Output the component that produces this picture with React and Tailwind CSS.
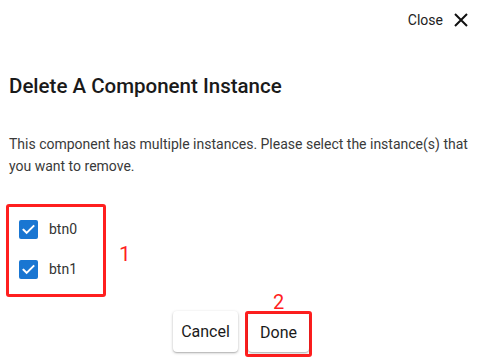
import React from "react";

function Check() {
  return (
    <span className="flex h-[19px] w-[19px] items-center justify-center rounded-[2px] bg-[#1976d2]">
      <svg width="15" height="15" viewBox="0 0 24 24" fill="none">
        <path d="M4 12.5l5 5L20 6.5" stroke="white" strokeWidth="3.2" strokeLinecap="square" />
      </svg>
    </span>
  );
}

export default function App() {
  return (
    <div className="relative h-[360px] w-[482px] overflow-hidden bg-white font-['Roboto',sans-serif] text-[#212121]">
      <div className="flex items-center justify-end gap-[10px] pr-[13px] pt-[11px]">
        <span className="text-[14px] leading-[18px] text-[#222]">Close</span>
        <svg width="16" height="16" viewBox="0 0 16 16">
          <path d="M2 2L14 14M14 2L2 14" stroke="#111" strokeWidth="2" />
        </svg>
      </div>
      <h1 className="ml-[9px] mt-[45px] text-[20.5px] font-medium leading-[24px] text-[#1a1a1a]">
        Delete A Component Instance
      </h1>
      <p className="ml-[9px] mt-[35px] w-[470px] text-[14px] leading-[22px] text-[#3a3a3a]">
        This component has multiple instances. Please select the instance(s) that you want to remove.
      </p>
      <div className="ml-[6px] mt-[27px] flex items-center gap-[13px]">
        <div className="flex h-[93px] w-[100px] flex-col justify-center gap-[21px] rounded-[3px] border-[3px] border-[#ff1f1f] pb-[3px] pl-[10px]">
          <label className="flex items-center gap-[11px]">
            <Check />
            <span className="text-[14px] leading-[18px] text-[#333]">btn0</span>
          </label>
          <label className="flex items-center gap-[11px]">
            <Check />
            <span className="text-[14px] leading-[18px] text-[#333]">btn1</span>
          </label>
        </div>
        <span className="mt-[6px] text-[21px] leading-[24px] text-[#ff1f1f]">1</span>
      </div>
      <div className="mt-[14px] flex items-start justify-center gap-[7px] pl-[3px]">
        <button className="h-[41px] w-[65px] rounded-[4px] bg-white text-[16px] font-normal text-[#1a1a1a] shadow-[0_1px_3px_rgba(0,0,0,0.25),0_1px_1px_rgba(0,0,0,0.12)]">
          Cancel
        </button>
        <div className="relative h-[46px] w-[67px] rounded-[3px] border-[3px] border-[#ff1f1f] p-[0px]">
          <span className="absolute left-1/2 top-[-22px] -translate-x-1/2 text-[20px] leading-[20px] text-[#ff1f1f]">2</span>
          <button className="h-[38px] w-full rounded-[4px] bg-white text-[16px] font-normal text-[#1a1a1a] shadow-[0_1px_3px_rgba(0,0,0,0.25),0_1px_1px_rgba(0,0,0,0.12)]">
            Done
          </button>
        </div>
      </div>
    </div>
  );
}
